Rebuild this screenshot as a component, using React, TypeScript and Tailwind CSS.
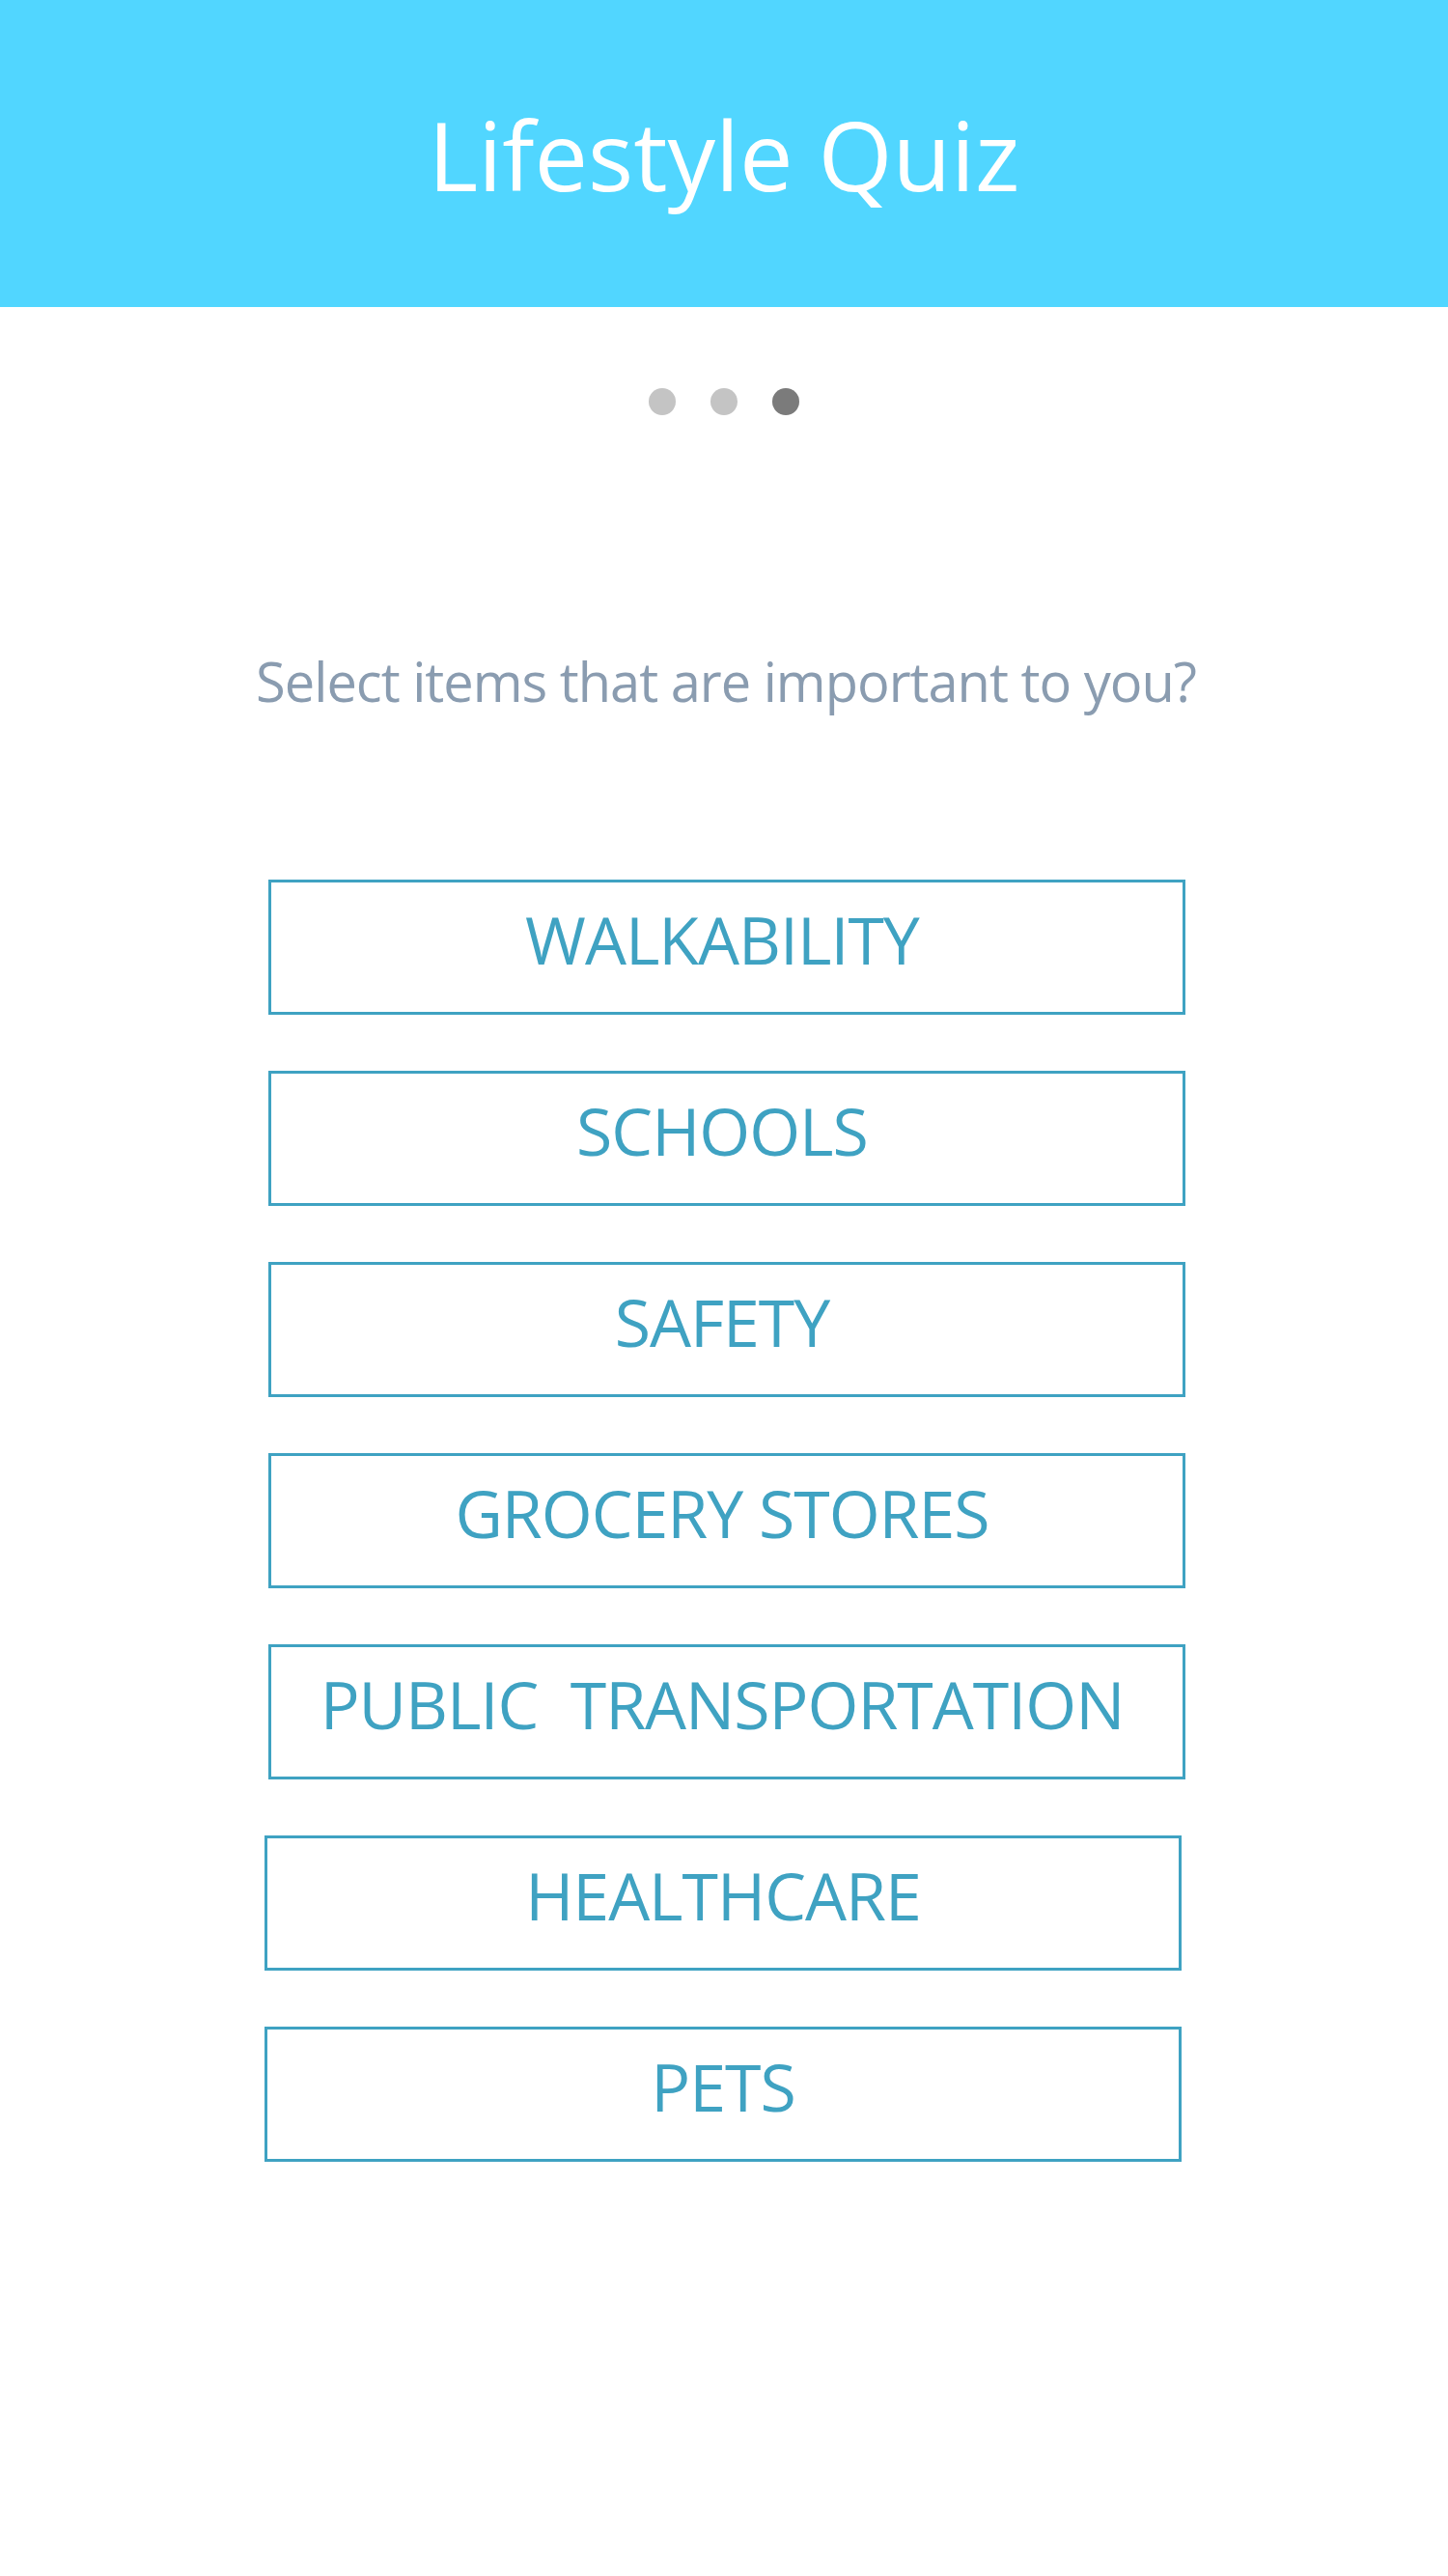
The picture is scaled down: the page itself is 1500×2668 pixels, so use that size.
import React from "react";

const items: { label: string; shift?: boolean }[] = [
  { label: "WALKABILITY" },
  { label: "SCHOOLS" },
  { label: "SAFETY" },
  { label: "GROCERY STORES" },
  { label: "PUBLIC\u00a0 TRANSPORTATION" },
  { label: "HEALTHCARE", shift: true },
  { label: "PETS", shift: true },
];

export default function App() {
  return (
    <div className="min-h-[2668px] w-[1500px] bg-white" style={{ fontFamily: '"Open Sans", "Noto Sans", sans-serif' }}>
      <header className="flex h-[318px] items-center justify-center bg-[#51d6ff]">
        <h1 className="text-[99px] font-normal leading-none text-white">Lifestyle Quiz</h1>
      </header>

      <div className="mt-[84px] flex justify-center gap-[36px]">
        <span className="h-[28px] w-[28px] rounded-full bg-[#c4c4c4]" />
        <span className="h-[28px] w-[28px] rounded-full bg-[#c4c4c4]" />
        <span className="h-[28px] w-[28px] rounded-full bg-[#7b7b7b]" />
      </div>

      <p className="mt-[247px] pl-[4px] text-center text-[56px] leading-none tracking-[-1px] text-[#8a9cb0]">
        Select items that are important to you?
      </p>

      <div className="mt-[178px] flex flex-col gap-[58px] pl-[278px]">
        {items.map((it) => (
          <button
            key={it.label}
            className={
              "flex h-[140px] w-[950px] justify-center border-[3px] border-solid border-[#3fa2c2] bg-white pt-[25px] text-[68px] leading-none tracking-[-1px] text-[#3fa2c2] " +
              (it.shift ? "-ml-1" : "pr-[10px]")
            }
          >
            <span className="whitespace-pre">{it.label}</span>
          </button>
        ))}
      </div>
    </div>
  );
}
